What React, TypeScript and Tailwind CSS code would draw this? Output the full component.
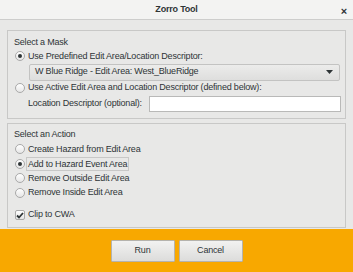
import React from "react";

function Radio({ checked }: { checked?: boolean }) {
  return (
    <span className="w-[10px] h-[10px] rounded-full border border-[#a9a9a9] bg-gradient-to-b from-[#ffffff] to-[#e6e6e6] flex items-center justify-center shrink-0">
      {checked && <span className="w-[4px] h-[4px] rounded-full bg-[#2e3436]" />}
    </span>
  );
}

function RadioRow({ label, checked, focus }: { label: string; checked?: boolean; focus?: boolean }) {
  return (
    <div className="h-[14.5px] flex items-center gap-[3px] pl-[7px]">
      <Radio checked={checked} />
      <span className={focus ? "border border-[#c8c8c7] px-[1px] leading-[12px] -ml-[2px]" : ""}>{label}</span>
    </div>
  );
}

export default function App() {
  return (
    <div
      className="w-[353px] h-[272px] flex flex-col bg-[#e8e8e7] text-[#2e3436] text-[9px] tracking-[-0.2px] overflow-hidden"
      style={{ fontFamily: '"Liberation Sans", Arial, sans-serif' }}
    >
      <div className="h-[20px] shrink-0 relative flex items-center justify-center bg-[#f3f3f2] border-b border-[#cdcdcc]">
        <span className="font-bold text-[9px]">Zorro Tool</span>
        <span className="absolute right-[6px] top-[3px] text-[11px] font-bold">×</span>
      </div>
      <div className="flex flex-col gap-[4px] px-[7px] pt-[10px]">
        <div className="h-[89px] border border-[#c8c8c7] flex flex-col pt-[5px]">
          <div className="h-[13px] flex items-center pl-[6px]">Select a Mask</div>
          <RadioRow label="Use Predefined Edit Area/Location Descriptor:" checked />
          <div className="ml-[21px] mr-[5px] h-[17px] flex items-center justify-between border border-[#c3c3c2] rounded-[2px] bg-gradient-to-b from-[#ececeb] to-[#dededd] pl-[5px] pr-[6px]">
            <span>W Blue Ridge - Edit Area: West_BlueRidge</span>
            <svg width="7" height="4" viewBox="0 0 7 4"><path d="M0 0 H7 L3.5 4 Z" fill="#2e3436" /></svg>
          </div>
          <RadioRow label="Use Active Edit Area and Location Descriptor (defined below):" />
          <div className="flex items-center mt-[1px] pl-[20px] pr-[4px] h-[16px]">
            <span className="w-[121px] shrink-0">Location Descriptor (optional):</span>
            <div className="flex-1 h-[16px] bg-white border border-[#b9b9b8]" />
          </div>
        </div>
        <div className="h-[105px] border border-[#c8c8c7] flex flex-col pt-[4px]">
          <div className="h-[14px] flex items-center pl-[6px]">Select an Action</div>
          <RadioRow label="Create Hazard from Edit Area" />
          <RadioRow label="Add to Hazard Event Area" checked focus />
          <RadioRow label="Remove Outside Edit Area" />
          <RadioRow label="Remove Inside Edit Area" />
          <div className="h-[14px] flex items-center gap-[3px] pl-[7px] mt-[8px]">
            <span className="w-[10px] h-[10px] rounded-[2px] border border-[#a9a9a9] bg-gradient-to-b from-[#ffffff] to-[#e6e6e6] flex items-center justify-center">
              <svg width="8" height="7" viewBox="0 0 8 7"><path d="M1 3.5 L3 5.5 L7 1" stroke="#2e3436" strokeWidth="1.8" fill="none" /></svg>
            </span>
            <span>Clip to CWA</span>
          </div>
        </div>
      </div>
      <div className="flex-1 mt-[1px] bg-[#f8a800] flex justify-center pt-[11px] gap-[4px]">
        <button className="w-[64px] h-[22px] border border-[#b5b3ad] bg-gradient-to-b from-[#f2f2f1] to-[#dcdcdb] rounded-[1px]">Run</button>
        <button className="w-[64px] h-[22px] border border-[#b5b3ad] bg-gradient-to-b from-[#f2f2f1] to-[#dcdcdb] rounded-[1px]">Cancel</button>
      </div>
    </div>
  );
}
